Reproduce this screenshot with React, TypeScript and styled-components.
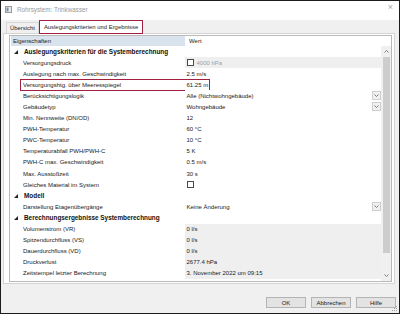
import React from "react";
import styled, { createGlobalStyle } from "styled-components";

const GlobalStyle = createGlobalStyle`
  html, body { margin: 0; padding: 0; background: #ffffff; }
  body { font-family: "Liberation Sans", Arial, sans-serif; }
  * { box-sizing: border-box; }
`;

const Window = styled.div`
  position: relative;
  width: 400px;
  height: 314px;
  border: 1px solid #1c1c1c;
  background: #f0f0f0;
  display: flex;
  flex-direction: column;
  overflow: hidden;
`;

const TitleBar = styled.div`
  height: 19px;
  flex: 0 0 19px;
  background: #ffffff;
  display: flex;
  align-items: center;
  padding: 0 6px 2px 4px;
  gap: 5px;
`;

const TitleText = styled.span`
  font-size: 6.3px;
  color: #9a9a9a;
  white-space: nowrap;
`;

const CloseGlyph = styled.span`
  margin-left: auto;
  font-size: 9px;
  line-height: 1;
  color: #a8a8a8;
  margin-bottom: 5px;
`;

const TabStrip = styled.div`
  height: 13px;
  flex: 0 0 13px;
  display: flex;
  align-items: flex-end;
  padding-left: 5px;
  position: relative;
  z-index: 1;
`;

const Tab = styled.div<{ $active?: boolean }>`
  height: ${(p) => (p.$active ? "14px" : "11px")};
  margin-bottom: ${(p) => (p.$active ? "-1px" : "0")};
  padding: 0 ${(p) => (p.$active ? "4px" : "3px")};
  display: flex;
  align-items: center;
  font-size: 5.9px;
  color: #1e1e1e;
  white-space: nowrap;
  background: ${(p) => (p.$active ? "#ffffff" : "#f0f0f0")};
  border: ${(p) => (p.$active ? "1.5px solid #a31f3f" : "1px solid #d6d6d6")};
  border-bottom: ${(p) => (p.$active ? "1.5px solid #a31f3f" : "none")};
`;

const TabPage = styled.div`
  flex: 0 0 251px;
  margin: 0 4px 0 2px;
  background: #ffffff;
  border: 1px solid #d4d4d4;
  padding: 1px 3px 0 5px;
`;

const Grid = styled.div`
  width: 383px;
  height: 247px;
  border: 1px solid #b9b9b9;
  display: flex;
  flex-direction: column;
`;

const HeaderRow = styled.div`
  height: 10px;
  flex: 0 0 10px;
  display: grid;
  grid-template-columns: 1px 174px 1fr;
  font-size: 6px;
  color: #222;
`;

const HeaderCell = styled.div<{ $shade?: boolean }>`
  display: flex;
  align-items: center;
  padding-left: ${(p) => (p.$shade ? "2px" : "4px")};
  background: ${(p) => (p.$shade ? "#d8e3ee" : "#ffffff")};
`;

const GridBody = styled.div`
  flex: 1;
  display: flex;
  min-height: 0;
`;

const RowList = styled.div`
  width: 371px;
  display: flex;
  flex-direction: column;
`;

const RowBase = styled.div`
  position: relative;
  height: 11.1px;
  flex: 0 0 11.1px;
  display: grid;
  grid-template-columns: 10px 165px 196px;
  font-size: 6px;
  color: #202020;
  white-space: nowrap;
`;

const Gutter = styled.div`
  display: flex;
  align-items: center;
  justify-content: flex-end;
  padding-right: 2px;
`;

const CategoryLabel = styled.div`
  grid-column: 2 / 4;
  display: flex;
  align-items: center;
  padding-left: 4px;
  font-weight: bold;
  font-size: 6.4px;
  color: #111;
`;

const NameCell = styled.div`
  display: flex;
  align-items: center;
  padding-left: 3px;
  overflow: hidden;
`;

const ValueCell = styled.div<{ $shade?: boolean }>`
  display: flex;
  align-items: center;
  padding-left: 1.5px;
  gap: 3px;
  background: ${(p) => (p.$shade ? "#efefef" : "#ffffff")};
  position: relative;
`;

const ValueText = styled.span<{ $muted?: boolean }>`
  color: ${(p) => (p.$muted ? "#a0a0a0" : "#202020")};
`;

const CheckBox = styled.span`
  width: 7px;
  height: 7px;
  border: 1px solid #4a4a4a;
  background: #fff;
  display: inline-block;
  flex: 0 0 7px;
`;

const DropButton = styled.span`
  position: absolute;
  right: 0;
  top: 1px;
  width: 9px;
  height: 9px;
  border: 1px solid #cfcfcf;
  background: #f0f0f0;
  display: flex;
  align-items: center;
  justify-content: center;
`;

const Highlight = styled.div`
  position: absolute;
  left: 10px;
  top: -0.5px;
  width: 190px;
  bottom: -0.5px;
  border: 1.5px solid #a31f3f;
  pointer-events: none;
`;

const ScrollBar = styled.div`
  width: 10px;
  background: #f0f0f0;
  display: flex;
  flex-direction: column;
  align-items: center;
  padding: 0 1px;
`;

const ScrollArrow = styled.div`
  height: 11px;
  flex: 0 0 11px;
  width: 100%;
  display: flex;
  align-items: center;
  justify-content: center;
`;

const ScrollThumb = styled.div`
  height: 196px;
  flex: 0 0 196px;
  width: 7px;
  background: #cdcdcd;
`;

const ScrollSpace = styled.div`
  flex: 1;
`;

const Footer = styled.div`
  flex: 1;
  display: flex;
  justify-content: flex-end;
  align-items: flex-start;
  gap: 5px;
  padding: 13px 3px 0 0;
`;

const Button = styled.button`
  width: 40px;
  height: 11px;
  padding: 0;
  border: 1px solid #b4b4b4;
  background: #e3e3e3;
  font-family: "Liberation Sans", Arial, sans-serif;
  font-size: 6px;
  color: #202020;
  display: flex;
  align-items: center;
  justify-content: center;
`;

const Grip = styled.svg`
  position: absolute;
  right: 1px;
  bottom: 1px;
`;

type Row =
  | { kind: "cat"; label: string }
  | {
      kind: "prop";
      name: string;
      value?: string;
      check?: boolean;
      dropdown?: boolean;
      shade?: boolean;
      muted?: boolean;
      highlight?: boolean;
    };

const rows: Row[] = [
  { kind: "cat", label: "Auslegungskriterien für die Systemberechnung" },
  { kind: "prop", name: "Versorgungsdruck", value: "4000 hPa", check: true, shade: true, muted: true },
  { kind: "prop", name: "Auslegung nach max. Geschwindigkeit", value: "2.5 m/s" },
  { kind: "prop", name: "Versorgungshtg. über Meeresspiegel", value: "61.25 m", highlight: true },
  { kind: "prop", name: "Berücksichtigungslogik", value: "Alle (Nichtwohngebäude)", dropdown: true },
  { kind: "prop", name: "Gebäudetyp", value: "Wohngebäude", dropdown: true },
  { kind: "prop", name: "Min. Nennweite (DN/OD)", value: "12" },
  { kind: "prop", name: "PWH-Temperatur", value: "60 °C" },
  { kind: "prop", name: "PWC-Temperatur", value: "10 °C" },
  { kind: "prop", name: "Temperaturabfall PWH/PWH-C", value: "5 K" },
  { kind: "prop", name: "PWH-C max. Geschwindigkeit", value: "0.5 m/s" },
  { kind: "prop", name: "Max. Ausstoßzeit", value: "30 s" },
  { kind: "prop", name: "Gleiches Material im System", check: true },
  { kind: "cat", label: "Modell" },
  { kind: "prop", name: "Darstellung Etagenübergänge", value: "Keine Änderung", dropdown: true },
  { kind: "cat", label: "Berechnungsergebnisse Systemberechnung" },
  { kind: "prop", name: "Volumenstrom (VR)", value: "0 l/s", shade: true },
  { kind: "prop", name: "Spitzendurchfluss (VS)", value: "0 l/s", shade: true },
  { kind: "prop", name: "Dauerdurchfluss (VD)", value: "0 l/s", shade: true },
  { kind: "prop", name: "Druckverlust", value: "2677.4 hPa", shade: true },
  { kind: "prop", name: "Zeitstempel letzter Berechnung", value: "3. November 2022 um 09:15", shade: true },
];

const Chevron = ({ up }: { up?: boolean }) => (
  <svg width="5" height="3" viewBox="0 0 5 3">
    <polyline
      points={up ? "0.5,2.5 2.5,0.5 4.5,2.5" : "0.5,0.5 2.5,2.5 4.5,0.5"}
      fill="none"
      stroke="#707070"
      strokeWidth="0.9"
    />
  </svg>
);

const CatGlyph = () => (
  <svg width="4" height="4" viewBox="0 0 4 4">
    <polygon points="4,0 4,4 0,4" fill="#222" />
  </svg>
);

const AppIcon = () => (
  <svg width="7" height="7" viewBox="0 0 7 7">
    <rect x="0.5" y="0.5" width="6" height="6" fill="#e8e8e8" stroke="#9a9a9a" strokeWidth="1" />
    <rect x="1.5" y="1.5" width="2" height="4" fill="#7b8da3" />
  </svg>
);

export default function App() {
  return (
    <>
      <GlobalStyle />
      <Window>
        <TitleBar>
          <AppIcon />
          <TitleText>Rohrsystem: Trinkwasser</TitleText>
          <CloseGlyph>×</CloseGlyph>
        </TitleBar>
        <TabStrip>
          <Tab>Übersicht</Tab>
          <Tab $active>Auslegungskriterien und Ergebnisse</Tab>
        </TabStrip>
        <TabPage>
          <Grid>
            <HeaderRow>
              <div />
              <HeaderCell $shade>Eigenschaften</HeaderCell>
              <HeaderCell>Wert</HeaderCell>
            </HeaderRow>
            <GridBody>
              <RowList>
                {rows.map((r, i) =>
                  r.kind === "cat" ? (
                    <RowBase key={i}>
                      <Gutter>
                        <CatGlyph />
                      </Gutter>
                      <CategoryLabel>{r.label}</CategoryLabel>
                    </RowBase>
                  ) : (
                    <RowBase key={i}>
                      <div />
                      <NameCell>{r.name}</NameCell>
                      <ValueCell $shade={r.shade}>
                        {r.check && <CheckBox />}
                        {r.value && <ValueText $muted={r.muted}>{r.value}</ValueText>}
                        {r.dropdown && (
                          <DropButton>
                            <Chevron />
                          </DropButton>
                        )}
                      </ValueCell>
                      {r.highlight && <Highlight />}
                    </RowBase>
                  )
                )}
              </RowList>
              <ScrollBar>
                <ScrollArrow>
                  <Chevron up />
                </ScrollArrow>
                <ScrollThumb />
                <ScrollSpace />
                <ScrollArrow>
                  <Chevron />
                </ScrollArrow>
              </ScrollBar>
            </GridBody>
          </Grid>
        </TabPage>
        <Footer>
          <Button>OK</Button>
          <Button>Abbrechen</Button>
          <Button>Hilfe</Button>
        </Footer>
        <Grip width="6" height="6" viewBox="0 0 6 6">
          <rect x="4" y="0" width="1" height="1" fill="#9a9a9a" />
          <rect x="2" y="2" width="1" height="1" fill="#9a9a9a" />
          <rect x="4" y="2" width="1" height="1" fill="#9a9a9a" />
          <rect x="0" y="4" width="1" height="1" fill="#9a9a9a" />
          <rect x="2" y="4" width="1" height="1" fill="#9a9a9a" />
          <rect x="4" y="4" width="1" height="1" fill="#9a9a9a" />
        </Grip>
      </Window>
    </>
  );
}
